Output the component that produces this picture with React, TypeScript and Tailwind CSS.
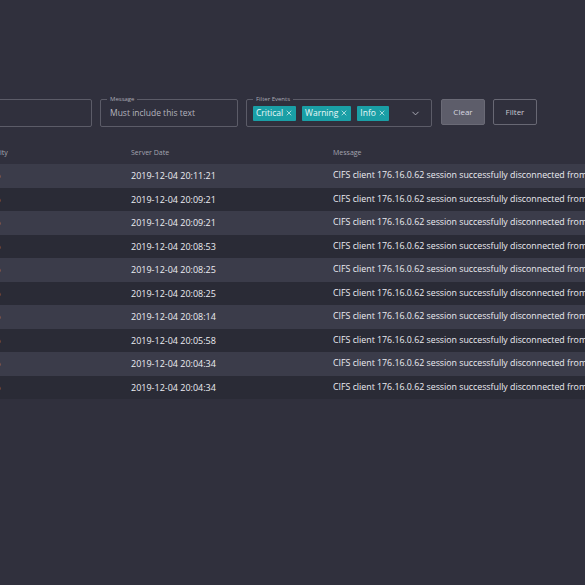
import React from 'react';
import { ChevronDown, X } from 'lucide-react';

const rows = [
  '2019-12-04 20:11:21',
  '2019-12-04 20:09:21',
  '2019-12-04 20:09:21',
  '2019-12-04 20:08:53',
  '2019-12-04 20:08:25',
  '2019-12-04 20:08:25',
  '2019-12-04 20:08:14',
  '2019-12-04 20:05:58',
  '2019-12-04 20:04:34',
  '2019-12-04 20:04:34',
];

const chips = ['Critical', 'Warning', 'Info'];

const App: React.FC = () => {
  return (
    <div className="w-[585px] h-[585px] overflow-hidden bg-[#30303d] font-['Open_Sans',sans-serif]">
      <div className="-ml-[46px] w-[700px] pt-[99px]">
        {/* Filter bar */}
        <div className="flex items-start">
          <div className="w-[138px] h-[28px] border border-[#5c5c68] rounded-[2px]" />
          <div className="relative ml-[8px] w-[138px] h-[28px] border border-[#5c5c68] rounded-[2px] flex items-center px-[9px]">
            <span className="absolute -top-[6px] left-[6px] px-[3px] bg-[#30303d] text-[6px] leading-[10px] text-[#a9a9b4]">
              Message
            </span>
            <span className="text-[8.5px] text-[#b4b4be]">Must include this text</span>
          </div>
          <div className="relative ml-[8px] w-[186px] h-[28px] border border-[#5c5c68] rounded-[2px] flex items-center pl-[6px] pr-[10px]">
            <span className="absolute -top-[6px] left-[6px] px-[3px] bg-[#30303d] text-[6px] leading-[10px] text-[#a9a9b4]">
              Filter Events
            </span>
            <div className="flex items-center gap-[6px]">
              {chips.map((c) => (
                <span
                  key={c}
                  className="flex items-center gap-[2px] h-[15px] px-[3px] bg-[#1a9fa6] rounded-[1px] text-[8.5px] text-[#eaf8f8]"
                >
                  {c}
                  <X className="w-[8px] h-[8px]" strokeWidth={2} />
                </span>
              ))}
            </div>
            <ChevronDown className="ml-auto w-[11px] h-[11px] text-[#b4b4be]" strokeWidth={2} />
          </div>
          <button className="ml-[9px] w-[44px] h-[26px] bg-[#5d5d6a] border border-[#6a6a76] rounded-[2px] text-[8px] text-[#d8d8e0]">
            Clear
          </button>
          <button className="ml-[8px] w-[44px] h-[26px] border border-[#686874] rounded-[2px] text-[8px] text-[#c8c8d0]">
            Filter
          </button>
        </div>

        {/* Table */}
        <div className="mt-[19px]">
          <div className="flex h-[14px] items-center pl-[28px] text-[7px] text-[#a5a5b0]">
            <span className="w-[149px]">Severity</span>
            <span className="w-[202px]">Server Date</span>
            <span>Message</span>
          </div>
          <div className="mt-[4px]">
            {rows.map((d, i) => (
              <div
                key={i}
                className={`flex h-[23.5px] items-center pl-[28px] text-[9px] text-[#ececf2] whitespace-nowrap ${
                  i % 2 === 0 ? 'bg-[#3b3c4a]' : 'bg-[#2a2b36]'
                }`}
              >
                <span className="w-[149px] pl-[2px]">Info</span>
                <span className="w-[202px]">{d}</span>
                <span className="text-[8.8px]">CIFS client 176.16.0.62 session successfully disconnected from SVM</span>
              </div>
            ))}
          </div>
        </div>
      </div>
    </div>
  );
};

export default App;
